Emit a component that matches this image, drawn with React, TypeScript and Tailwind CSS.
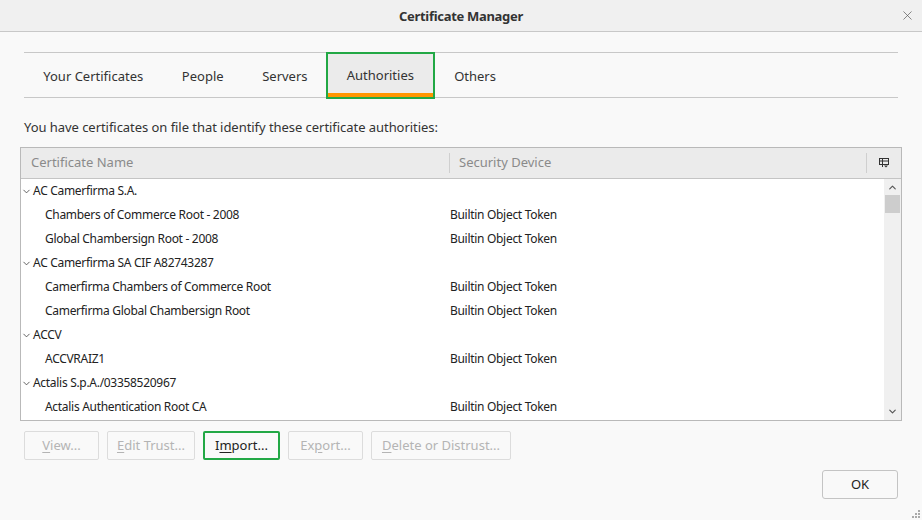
import { ChevronDown, ChevronUp, X } from "lucide-react";

const tabs = ["Your Certificates", "People", "Servers", "Authorities", "Others"];

type Row = { name: string; device?: string; group?: boolean };

const rows: Row[] = [
  { name: "AC Camerfirma S.A.", group: true },
  { name: "Chambers of Commerce Root - 2008", device: "Builtin Object Token" },
  { name: "Global Chambersign Root - 2008", device: "Builtin Object Token" },
  { name: "AC Camerfirma SA CIF A82743287", group: true },
  { name: "Camerfirma Chambers of Commerce Root", device: "Builtin Object Token" },
  { name: "Camerfirma Global Chambersign Root", device: "Builtin Object Token" },
  { name: "ACCV", group: true },
  { name: "ACCVRAIZ1", device: "Builtin Object Token" },
  { name: "Actalis S.p.A./03358520967", group: true },
  { name: "Actalis Authentication Root CA", device: "Builtin Object Token" },
];

const Btn = ({ label, u, w, active }: { label: string; u: number; w: string; active?: boolean }) => (
  <div
    className={`h-[29px] ${w} flex items-center justify-center rounded-[2px] text-[13px] ${
      active ? "border-2 border-[#22a845] text-[#222]" : "border border-[#dcdcdc] text-[#b4b4b4]"
    }`}
  >
    <span>
      {label.slice(0, u)}
      <span className="underline underline-offset-2">{label[u]}</span>
      {label.slice(u + 1)}
    </span>
  </div>
);

export default function App() {
  return (
    <div
      className="w-[922px] h-[520px] bg-[#f9f9f9] flex flex-col text-[#222] overflow-hidden relative"
      style={{ fontFamily: '"Noto Sans", "Open Sans", sans-serif' }}
    >
      {/* title bar */}
      <div className="h-[32px] shrink-0 bg-[#f0f0f0] border-b border-[#c8c8c8] flex items-center justify-center relative">
        <span className="text-[13px] font-bold text-[#333] tracking-[-0.3px] pt-[2px]">Certificate Manager</span>
        <X className="absolute right-[7px] top-[8px] text-[#555]" size={15} strokeWidth={1.1} />
      </div>

      {/* tabs */}
      <div className="mx-[24px] mt-[20px] h-[46px] border-y border-[#c8c8c8] flex">
        {tabs.map((t) =>
          t === "Authorities" ? (
            <div
              key={t}
              className="ml-[-1px] -my-px w-[109px] h-[47px] border-2 border-[#22a845] bg-[#ebebeb] flex flex-col"
            >
              <div className="flex-1 flex items-center justify-center text-[13px] text-[#333] pt-[5px]">{t}</div>
              <div className="h-[4px] bg-[#ff9500]" />
            </div>
          ) : (
            <div key={t} className="px-[19.3px] pt-[3px] flex items-center text-[13px] text-[#333]">
              {t}
            </div>
          )
        )}
      </div>

      <div className="mx-[24px] mt-[20px] text-[13px] text-[#333] leading-[18px] tracking-[-0.05px]">
        You have certificates on file that identify these certificate authorities:
      </div>

      {/* tree table */}
      <div className="mx-[20px] mt-[11px] h-[274px] border border-[#b9b9b9] bg-white flex flex-col">
        <div className="h-[31px] shrink-0 bg-[#ebebeb] border-b border-[#c4c4c4] flex items-center text-[13px] text-[#8a8a8a]">
          <div className="w-[428px] pl-[10px] h-full flex items-center">Certificate Name</div>
          <div className="w-px h-[20px] bg-[#cfcfcf]" />
          <div className="w-[416px] pl-[9px] h-full flex items-center">Security Device</div>
          <div className="w-px h-[20px] bg-[#cfcfcf]" />
          <div className="flex-1 flex items-center justify-center">
            <svg width="10" height="10" viewBox="0 0 10 10" fill="none" stroke="#333" strokeWidth="1">
              <rect x="0.5" y="0.5" width="9" height="6" />
              <line x1="0.5" y1="3" x2="9.5" y2="3" />
              <line x1="3.5" y1="0.5" x2="3.5" y2="9" />
              <path d="M5 7.5 h4 l-2 2 z" fill="#333" stroke="none" />
            </svg>
          </div>
        </div>
        <div className="flex-1 flex min-h-0">
          <div className="flex-1 flex flex-col">
            {rows.map((r) => (
              <div key={r.name} className="h-[24px] flex items-center text-[12px] text-[#222] tracking-[-0.3px]">
                {r.group ? (
                  <div className="flex items-center">
                    <ChevronDown size={11} strokeWidth={1.8} className="text-[#444] mr-[1px]" />
                    <span>{r.name}</span>
                  </div>
                ) : (
                  <>
                    <div className="w-[429px] pl-[24px]">{r.name}</div>
                    <div>{r.device}</div>
                  </>
                )}
              </div>
            ))}
          </div>
          <div className="w-[17px] bg-[#f0f0f0] flex flex-col items-center">
            <div className="h-[16px] w-full flex items-center justify-center">
              <ChevronUp size={11} strokeWidth={2.5} className="text-[#555]" />
            </div>
            <div className="w-[15px] h-[18px] bg-[#cdcdcd]" />
            <div className="flex-1" />
            <div className="h-[18px] w-full flex items-center justify-center">
              <ChevronDown size={11} strokeWidth={2.5} className="text-[#555]" />
            </div>
          </div>
        </div>
      </div>

      {/* buttons */}
      <div className="mx-[24px] mt-[10px] flex gap-[8px]">
        <Btn label="View..." u={0} w="w-[75px]" />
        <Btn label="Edit Trust..." u={0} w="w-[88px]" />
        <Btn label="Import..." u={1} w="w-[77px]" active />
        <Btn label="Export..." u={2} w="w-[75px]" />
        <Btn label="Delete or Distrust..." u={0} w="w-[140px]" />
      </div>

      <div className="flex justify-end mr-[24px] mt-[10px]">
        <div className="w-[76px] h-[29px] border border-[#c4c4c4] rounded-[3px] flex items-center justify-center text-[13px] text-[#222]">
          OK
        </div>
      </div>

      {/* resize grip */}
      <svg className="absolute right-[2px] bottom-[2px]" width="8" height="8" viewBox="0 0 8 8" fill="#aaa">
        <rect x="6" y="0" width="2" height="2" />
        <rect x="3" y="3" width="2" height="2" />
        <rect x="6" y="3" width="2" height="2" />
        <rect x="0" y="6" width="2" height="2" />
        <rect x="3" y="6" width="2" height="2" />
        <rect x="6" y="6" width="2" height="2" />
      </svg>
    </div>
  );
}
